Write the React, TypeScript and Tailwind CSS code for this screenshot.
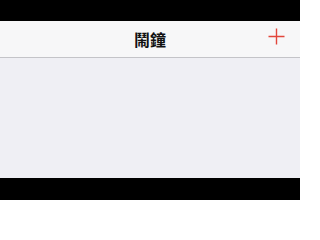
import React from "react";

export default function App() {
  return (
    <div className="w-[300px] h-[200px] flex flex-col bg-black overflow-hidden" style={{ fontFamily: '"Noto Sans CJK TC", "Noto Sans", sans-serif' }}>
      <div className="h-[21px] shrink-0 bg-black" />
      <div className="h-[37px] shrink-0 bg-[#f7f7f8] border-b border-[#c4c4c8] relative flex items-center justify-center">
        <span className="text-[16px] font-semibold text-[#111] leading-none">鬧鐘</span>
        <svg className="absolute right-[15px] top-[7px]" width="17" height="17" viewBox="0 0 17 17">
          <path d="M8.5 0.5V16.5M0.5 8.5H16.5" stroke="#e2463b" strokeWidth="1.4" fill="none" />
        </svg>
      </div>
      <div className="h-[120px] shrink-0 bg-[#efeff4]" />
      <div className="flex-1 bg-black" />
    </div>
  );
}
